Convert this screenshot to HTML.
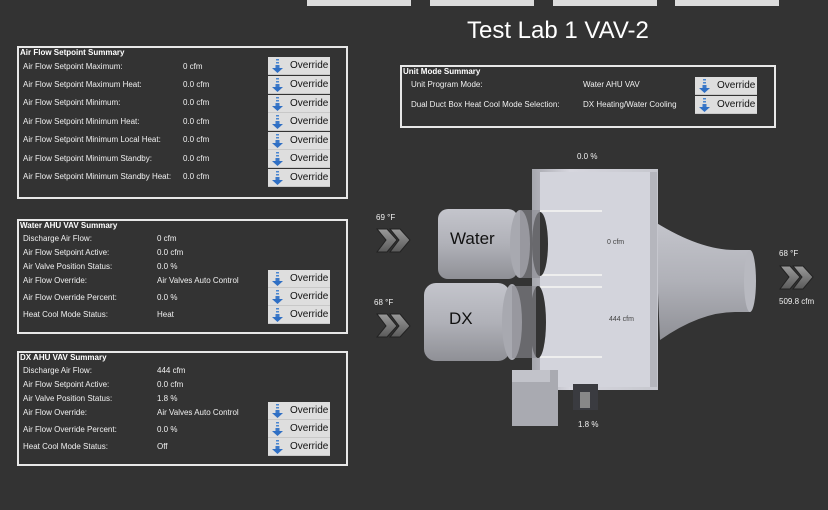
<!DOCTYPE html>
<html><head><style>
body{margin:0;width:828px;height:510px;background:#333333;font-family:"Liberation Sans",sans-serif;overflow:hidden;position:relative;color:#fff}
.a{position:absolute;white-space:nowrap}
.tb{position:absolute;top:0;height:6px;background:#dcdcdc}
.panel{position:absolute;border:2px solid #e8e8e8;box-sizing:border-box}
.ttl{position:absolute;left:1px;top:0;font-size:8px;font-weight:bold;color:#fff}
.l{font-size:8px;color:#f0f0f0}
.btn{position:absolute;width:62px;height:18px;background:#dedede;border-bottom:1px solid #c8c8c8;box-sizing:border-box;color:#111;font-size:10px;font-family:"Liberation Sans",sans-serif}
.btn span{position:absolute;left:22px;top:3px}
.btn svg{position:absolute;left:4px;top:2px}
</style></head><body>
<div class="tb" style="left:307px;width:104px"></div>
<div class="tb" style="left:430px;width:104px"></div>
<div class="tb" style="left:553px;width:104px"></div>
<div class="tb" style="left:675px;width:104px"></div>
<div class="a" style="left:467px;top:17px;font-size:24px;color:#fff">Test Lab 1 VAV-2</div>

<svg width="0" height="0" style="position:absolute"><defs><g id="ar"><rect x="4" y="0" width="3" height="1.5" fill="#4a86d0"/><rect x="4" y="3" width="3" height="1.5" fill="#4a86d0"/><rect x="3.5" y="6" width="4" height="3" fill="#3b78c8"/><path d="M0 9 L11 9 L5.5 14 Z" fill="#2f6fc4"/></g></defs></svg>

<div class="panel" style="left:17px;top:46px;width:331px;height:153px">
<div class="ttl">Air Flow Setpoint Summary</div>
</div>
<div class="a l" style="left:23px;top:62px">Air Flow Setpoint Maximum:</div><div class="a l" style="left:183px;top:62px">0 cfm</div>
<div class="a l" style="left:23px;top:80px">Air Flow Setpoint Maximum Heat:</div><div class="a l" style="left:183px;top:80px">0.0 cfm</div>
<div class="a l" style="left:23px;top:98px">Air Flow Setpoint Minimum:</div><div class="a l" style="left:183px;top:98px">0.0 cfm</div>
<div class="a l" style="left:23px;top:117px">Air Flow Setpoint Minimum Heat:</div><div class="a l" style="left:183px;top:117px">0.0 cfm</div>
<div class="a l" style="left:23px;top:135px">Air Flow Setpoint Minimum Local Heat:</div><div class="a l" style="left:183px;top:135px">0.0 cfm</div>
<div class="a l" style="left:23px;top:154px">Air Flow Setpoint Minimum Standby:</div><div class="a l" style="left:183px;top:154px">0.0 cfm</div>
<div class="a l" style="left:23px;top:172px">Air Flow Setpoint Minimum Standby Heat:</div><div class="a l" style="left:183px;top:172px">0.0 cfm</div>
<div class="btn" style="left:268px;top:57px"><svg width="12" height="15"><use href="#ar"/></svg><span>Override</span></div>
<div class="btn" style="left:268px;top:76px"><svg width="12" height="15"><use href="#ar"/></svg><span>Override</span></div>
<div class="btn" style="left:268px;top:95px"><svg width="12" height="15"><use href="#ar"/></svg><span>Override</span></div>
<div class="btn" style="left:268px;top:113px"><svg width="12" height="15"><use href="#ar"/></svg><span>Override</span></div>
<div class="btn" style="left:268px;top:132px"><svg width="12" height="15"><use href="#ar"/></svg><span>Override</span></div>
<div class="btn" style="left:268px;top:150px"><svg width="12" height="15"><use href="#ar"/></svg><span>Override</span></div>
<div class="btn" style="left:268px;top:169px"><svg width="12" height="15"><use href="#ar"/></svg><span>Override</span></div>

<div class="panel" style="left:17px;top:219px;width:331px;height:115px">
<div class="ttl">Water AHU VAV Summary</div></div>
<div class="a l" style="left:23px;top:234px">Discharge Air Flow:</div><div class="a l" style="left:157px;top:234px">0 cfm</div>
<div class="a l" style="left:23px;top:248px">Air Flow Setpoint Active:</div><div class="a l" style="left:157px;top:248px">0.0 cfm</div>
<div class="a l" style="left:23px;top:262px">Air Valve Position Status:</div><div class="a l" style="left:157px;top:262px">0.0 %</div>
<div class="a l" style="left:23px;top:276px">Air Flow Override:</div><div class="a l" style="left:157px;top:276px">Air Valves Auto Control</div>
<div class="a l" style="left:23px;top:293px">Air Flow Override Percent:</div><div class="a l" style="left:157px;top:293px">0.0 %</div>
<div class="a l" style="left:23px;top:310px">Heat Cool Mode Status:</div><div class="a l" style="left:157px;top:310px">Heat</div>
<div class="btn" style="left:268px;top:270px"><svg width="12" height="15"><use href="#ar"/></svg><span>Override</span></div>
<div class="btn" style="left:268px;top:288px"><svg width="12" height="15"><use href="#ar"/></svg><span>Override</span></div>
<div class="btn" style="left:268px;top:306px"><svg width="12" height="15"><use href="#ar"/></svg><span>Override</span></div>

<div class="panel" style="left:17px;top:351px;width:331px;height:115px">
<div class="ttl">DX AHU VAV Summary</div></div>
<div class="a l" style="left:23px;top:366px">Discharge Air Flow:</div><div class="a l" style="left:157px;top:366px">444 cfm</div>
<div class="a l" style="left:23px;top:380px">Air Flow Setpoint Active:</div><div class="a l" style="left:157px;top:380px">0.0 cfm</div>
<div class="a l" style="left:23px;top:394px">Air Valve Position Status:</div><div class="a l" style="left:157px;top:394px">1.8 %</div>
<div class="a l" style="left:23px;top:408px">Air Flow Override:</div><div class="a l" style="left:157px;top:408px">Air Valves Auto Control</div>
<div class="a l" style="left:23px;top:425px">Air Flow Override Percent:</div><div class="a l" style="left:157px;top:425px">0.0 %</div>
<div class="a l" style="left:23px;top:442px">Heat Cool Mode Status:</div><div class="a l" style="left:157px;top:442px">Off</div>
<div class="btn" style="left:268px;top:402px"><svg width="12" height="15"><use href="#ar"/></svg><span>Override</span></div>
<div class="btn" style="left:268px;top:420px"><svg width="12" height="15"><use href="#ar"/></svg><span>Override</span></div>
<div class="btn" style="left:268px;top:438px"><svg width="12" height="15"><use href="#ar"/></svg><span>Override</span></div>

<div class="panel" style="left:400px;top:65px;width:376px;height:63px">
<div class="ttl">Unit Mode Summary</div></div>
<div class="a l" style="left:411px;top:80px">Unit Program Mode:</div><div class="a l" style="left:583px;top:80px">Water AHU VAV</div>
<div class="a l" style="left:411px;top:100px">Dual Duct Box Heat Cool Mode Selection:</div><div class="a l" style="left:583px;top:100px">DX Heating/Water Cooling</div>
<div class="btn" style="left:695px;top:77px"><svg width="12" height="15"><use href="#ar"/></svg><span>Override</span></div>
<div class="btn" style="left:695px;top:96px"><svg width="12" height="15"><use href="#ar"/></svg><span>Override</span></div>

<svg class="a" style="left:0;top:0" width="828" height="510">
<defs>
<linearGradient id="cy" x1="0" y1="0" x2="0" y2="1"><stop offset="0" stop-color="#c4c5cc"/><stop offset=".5" stop-color="#b0b1b8"/><stop offset="1" stop-color="#8f9096"/></linearGradient>
<linearGradient id="bx" x1="0" y1="0" x2="1" y2="0"><stop offset="0" stop-color="#a6a7ae"/><stop offset=".3" stop-color="#d6d6de"/><stop offset="1" stop-color="#c6c7ce"/></linearGradient>
<linearGradient id="ch" x1="0" y1="0" x2="0" y2="1"><stop offset="0" stop-color="#9a9a9a"/><stop offset="1" stop-color="#5a5a5a"/></linearGradient>
</defs>
<path d="M655 222 Q700 250 735 250 L750 250 L750 312 L735 312 Q700 312 660 340 Z" fill="url(#cy)"/>
<ellipse cx="750" cy="281" rx="6" ry="31" fill="#b8b9c0"/>
<rect x="532" y="169" width="126" height="221" fill="url(#bx)"/>
<rect x="540" y="172" width="114" height="215" fill="#d3d4dc"/>
<rect x="650" y="172" width="7" height="215" fill="#b5b6bd"/>
<rect x="540" y="210" width="62" height="2" fill="#eee"/>
<rect x="540" y="274" width="62" height="2" fill="#eee"/>
<rect x="540" y="286" width="62" height="2" fill="#eee"/>
<rect x="540" y="356" width="62" height="2" fill="#eee"/>
<rect x="438" y="209" width="80" height="70" rx="10" fill="url(#cy)"/>
<ellipse cx="520" cy="244" rx="10" ry="34" fill="#a8a9b0"/>
<ellipse cx="540" cy="244" rx="8" ry="32" fill="#333"/>
<rect x="520" y="210" width="20" height="68" fill="#8d8e94" opacity=".6"/>
<rect x="424" y="283" width="86" height="78" rx="12" fill="url(#cy)"/>
<ellipse cx="512" cy="322" rx="10" ry="38" fill="#a8a9b0"/>
<ellipse cx="538" cy="322" rx="8" ry="36" fill="#333"/>
<rect x="512" y="286" width="24" height="72" fill="#8d8e94" opacity=".6"/>
<rect x="512" y="370" width="46" height="56" fill="#a9aab1"/>
<rect x="512" y="370" width="38" height="12" fill="#c2c3ca"/>
<rect x="573" y="384" width="25" height="26" fill="#3a3b40"/>
<rect x="580" y="392" width="10" height="16" fill="#888"/>
<g fill="url(#ch)" stroke="#222" stroke-width="1">
<path d="M377 229 L387 229 L397 240 L387 252 L377 252 L386 240 Z"/>
<path d="M390 229 L400 229 L410 240 L400 252 L390 252 L399 240 Z"/>
<path d="M377 314 L387 314 L397 326 L387 337 L377 337 L386 326 Z"/>
<path d="M390 314 L400 314 L410 326 L400 337 L390 337 L399 326 Z"/>
<path d="M780 266 L790 266 L800 277 L790 289 L780 289 L789 277 Z"/>
<path d="M793 266 L803 266 L813 277 L803 289 L793 289 L802 277 Z"/>
</g>
</svg>
<div class="a" style="left:450px;top:229px;font-size:17px;color:#111">Water</div>
<div class="a" style="left:449px;top:309px;font-size:17px;color:#111">DX</div>
<div class="a" style="left:607px;top:239px;font-size:7px;color:#444">0 cfm</div>
<div class="a" style="left:609px;top:316px;font-size:7px;color:#444">444 cfm</div>
<div class="a l" style="left:577px;top:152px">0.0 %</div>
<div class="a l" style="left:376px;top:213px">69 °F</div>
<div class="a l" style="left:374px;top:298px">68 °F</div>
<div class="a l" style="left:779px;top:249px">68 °F</div>
<div class="a l" style="left:779px;top:297px">509.8 cfm</div>
<div class="a l" style="left:578px;top:420px">1.8 %</div>
</body></html>
